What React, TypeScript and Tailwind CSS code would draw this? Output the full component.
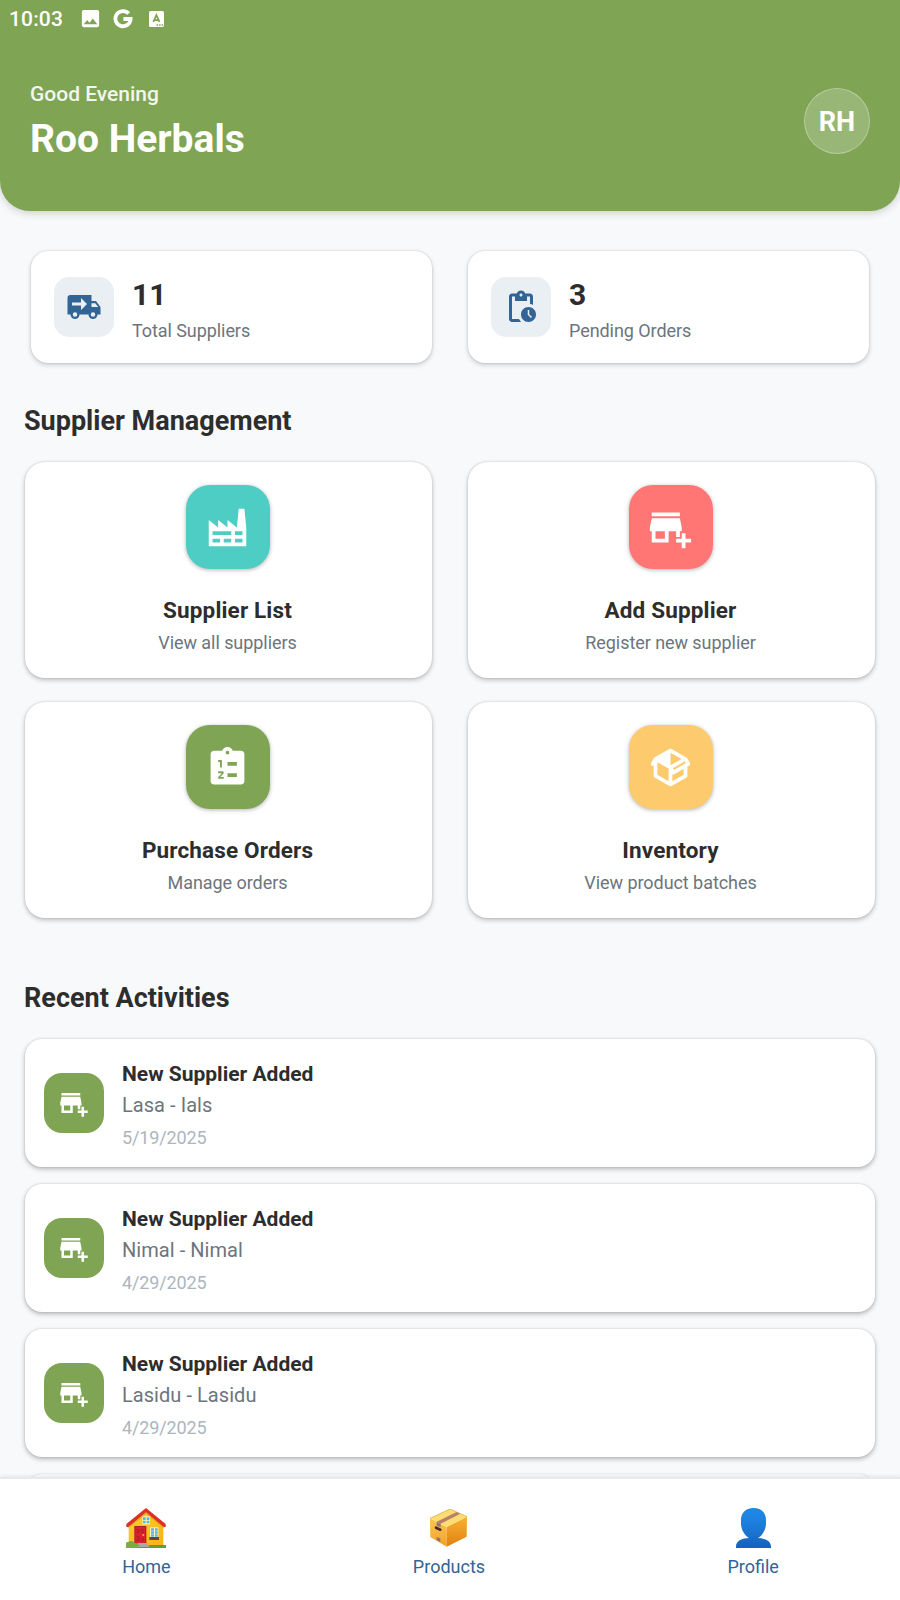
import type { ReactNode } from "react";
import { MdAddBusiness, MdPendingActions, MdImage } from "react-icons/md";

function Glyph({ d, size }: { d: string; size: number }) {
  return (
    <svg width={size} height={size} viewBox="0 0 24 24" fill="currentColor" fillRule="evenodd">
      <path d={d} />
    </svg>
  );
}

const TRUCK =
  "M3,4A2,2 0 0,0 1,6V17H3A3,3 0 0,0 6,20A3,3 0 0,0 9,17H15A3,3 0 0,0 18,20A3,3 0 0,0 21,17H23V12L20,8H17V4M10,6L14,10L10,14V11H4V9H10M17,9.5H19.5L21.47,12H17M6,15.5A1.5,1.5 0 0,1 7.5,17A1.5,1.5 0 0,1 6,18.5A1.5,1.5 0 0,1 4.5,17A1.5,1.5 0 0,1 6,15.5M18,15.5A1.5,1.5 0 0,1 19.5,17A1.5,1.5 0 0,1 18,18.5A1.5,1.5 0 0,1 16.5,17A1.5,1.5 0 0,1 18,15.5Z";
const FACTORY =
  "M4,18V20H8V18H4M4,14V16H14V14H4M10,18V20H14V18H10M16,14V16H20V14H16M16,18V20H20V18H16M2,22V8L7,12V8L12,12V8L17,12L18,2H21L22,12V22H2Z";
const CLIPBOARD =
  "M12,3A1,1 0 0,1 13,4A1,1 0 0,1 12,5A1,1 0 0,1 11,4A1,1 0 0,1 12,3M19,3H14.82C14.4,1.84 13.3,1 12,1C10.7,1 9.6,1.84 9.18,3H5A2,2 0 0,0 3,5V19A2,2 0 0,0 5,21H19A2,2 0 0,0 21,19V5A2,2 0 0,0 19,3M7,8H9V12H8V9H7V8M10,17V18H7V17.08L9,15H7V14H9.25A.75,.75 0 0,1 10,14.75C10,14.95 9.92,15.14 9.79,15.27L8.12,17H10M17,17H12V15H17V17M17,11H12V9H17V11Z";
const PACKAGE =
  "M2,10.96C1.5,10.68 1.35,10.07 1.63,9.59L3.13,7C3.24,6.8 3.41,6.66 3.6,6.58L11.43,2.18C11.59,2.06 11.79,2 12,2C12.21,2 12.41,2.06 12.57,2.18L20.47,6.62C20.66,6.72 20.82,6.88 20.91,7.08L22.36,9.6C22.64,10.08 22.47,10.69 22,10.96L21,11.54V16.5C21,16.88 20.79,17.21 20.47,17.38L12.57,21.82C12.41,21.94 12.21,22 12,22C11.79,22 11.59,21.94 11.43,21.82L3.53,17.38C3.21,17.21 3,16.88 3,16.5V10.96C2.7,11.13 2.32,11.14 2,10.96M12,4.15L12,10.85L17.96,7.5L12,4.15M5,15.91L11,19.29V12.58L5,9.21V15.91M19,15.91V12.69L14,15.59C13.67,15.77 13.3,15.76 13,15.6V19.29L19,15.91M13.85,13.36L20.13,9.73L19.55,8.72L13.27,12.35L13.85,13.36Z";

function HouseIcon() {
  return (
    <svg width="40" height="40" viewBox="0 0 120 120">
      <defs>
        <linearGradient id="wall" x1="0" y1="0" x2="1" y2="1">
          <stop offset="0" stopColor="#fdd02f" />
          <stop offset="1" stopColor="#f9b214" />
        </linearGradient>
      </defs>
      <path d="M8 52 60 8l52 44v63H8Z" fill="url(#wall)" />
      <path d="M60 0 118 47q2 2 1 9l-5 2L60 13 6 58l-5-2q-1-7 1-9Z" fill="#dc3027" />
      <path d="M60 13 114 58V61L60 18 6 61v-3Z" fill="#c98a10" opacity="0.5" />
      <rect x="49" y="25" width="23" height="24" fill="#fff3c8" />
      <path d="M51 28h8v8h-8zM62 28h8v8h-8zM51 38h8v8h-8zM62 38h8v8h-8z" fill="#55b7e6" />
      <rect x="25" y="54" width="36" height="53" fill="#b5182a" />
      <rect x="28" y="57" width="30" height="50" fill="#d8232f" />
      <path d="M32 62h9v14h-9zM45 62h9v14h-9zM32 83h9v17h-9zM45 89h9v11h-9z" fill="#c51c2c" />
      <circle cx="52" cy="81" r="3" fill="#fbc02d" />
      <rect x="72" y="58" width="25" height="30" fill="#fff3c8" />
      <path d="M75 61h9v7h-9zM87 61h8v7h-8zM75 70h9v7h-9zM87 70h8v7h-8zM75 79h9v7h-9zM87 79h8v7h-8z" fill="#55b7e6" />
      <rect x="70" y="87" width="29" height="9" rx="1" fill="#6d4238" />
      <rect x="30" y="111" width="90" height="9" rx="1" fill="#6b9a34" />
      <path d="M35 105h30v7h4v5H35z" fill="#a9a9a4" />
      <path d="M0 120V106q1-5 7-4 5-5 12-2 5 0 7 5 11 0 12 9v6Z" fill="#7cab42" />
    </svg>
  );
}

function ParcelIcon() {
  return (
    <svg width="37" height="38" viewBox="0 0 111 114">
      <defs>
        <linearGradient id="front" x1="0" y1="0" x2="0" y2="1">
          <stop offset="0" stopColor="#fdc750" />
          <stop offset="1" stopColor="#f3a02a" />
        </linearGradient>
        <linearGradient id="side" x1="0" y1="0" x2="0" y2="1">
          <stop offset="0" stopColor="#fbb12f" />
          <stop offset="1" stopColor="#de8212" />
        </linearGradient>
      </defs>
      <path d="M0 28 50 54v59L1 84Z" fill="url(#front)" />
      <path d="M50 54 111 23l-1 60-60 30Z" fill="url(#side)" />
      <path d="M0 28 60 0l51 23-61 31Z" fill="#fddc72" />
      <path d="M0 28 60 0l51 23" fill="none" stroke="#d2a13c" strokeWidth="2" />
      <path d="M20 38 80 9l11 5L32 44Z" fill="#b8806b" />
      <path d="M20 38l12 6v11l-12-5Z" fill="#94766b" />
      <path d="M20 84l11 4v11l-11-5Z" fill="#94766b" />
      <path d="M18 56l13 6" stroke="#4a2d25" strokeWidth="8" strokeLinecap="round" />
    </svg>
  );
}

function PersonIcon() {
  return (
    <svg width="35" height="40" viewBox="0 0 105 120">
      <defs>
        <linearGradient id="person" x1="0" y1="0" x2="0" y2="1">
          <stop offset="0" stopColor="#1e88e5" />
          <stop offset="0.35" stopColor="#1d80df" />
          <stop offset="1" stopColor="#1561bd" />
        </linearGradient>
      </defs>
      <path
        d="M52 0C77 0 90 15 90 36v10C90 66 78 83 66 90c20 1 39 7 39 26v4H0v-4C0 97 19 91 39 90 27 83 15 66 15 46V36C15 15 28 0 52 0Z"
        fill="url(#person)"
      />
    </svg>
  );
}

function StatCard({ icon, value, label }: { icon: ReactNode; value: string; label: string }) {
  return (
    <div className="flex h-28 w-[401px] items-center rounded-[17px] bg-white pl-[23px] shadow-[0_0_2px_rgba(0,0,0,0.18),0_2px_5px_rgba(0,0,0,0.18)]">
      <div className="flex size-[60px] items-center justify-center rounded-[15px] bg-[#eaeff4] text-[#326496]">
        {icon}
      </div>
      <div className="ml-[18px] pt-[6px]">
        <div className="text-[30px] leading-[36px] font-bold text-[#2d2d2d]">{value}</div>
        <div className="mt-[6px] text-[18px] leading-[24px] tracking-[-0.07px] text-[#6c757d]">{label}</div>
      </div>
    </div>
  );
}

function ActionCard({ icon, tile, title, sub }: { icon: ReactNode; tile: string; title: string; sub: string }) {
  return (
    <div className="flex h-[216px] w-[407px] flex-col items-center rounded-[20px] bg-white pt-[23px] pr-[2px] shadow-[0_0_2px_rgba(0,0,0,0.16),0_2px_5px_rgba(0,0,0,0.24)]">
      <div className={`flex size-[84px] items-center justify-center rounded-[24px] text-white shadow-[0_1px_4px_rgba(0,0,0,0.3)] ${tile}`}>
        {icon}
      </div>
      <div className="mt-[27px] text-[22.5px] leading-[28px] font-bold tracking-[0.15px] text-[#2d2d2d]">{title}</div>
      <div className="mt-[7px] text-[18px] leading-[24px] tracking-[-0.06px] text-[#6c757d]">{sub}</div>
    </div>
  );
}

function Activity({ detail, date }: { detail: string; date: string }) {
  return (
    <div className="flex h-[128px] shrink-0 items-center rounded-[17px] bg-white pl-[19px] shadow-[0_0_2px_rgba(0,0,0,0.14),0_2px_5px_rgba(0,0,0,0.28)]">
      <div className="flex size-[60px] items-center justify-center rounded-[18px] bg-[#7fa454] text-white">
        <MdAddBusiness size={30} />
      </div>
      <div className="ml-[18px] pt-[4px]">
        <div className="text-[21px] leading-[28px] font-bold text-[#2d2d2d]">New Supplier Added</div>
        <div className="mt-[3px] text-[20px] leading-[28px] tracking-[0.05px] text-[#6c757d]">{detail}</div>
        <div className="mt-[7px] text-[18px] leading-[24px] tracking-[-0.12px] text-[#adb5bd]">{date}</div>
      </div>
    </div>
  );
}

function Tab({ icon, label }: { icon: ReactNode; label: string }) {
  return (
    <div className="flex flex-col items-center">
      <div className="flex h-[42px] items-center">{icon}</div>
      <div className="mt-[6px] text-[18px] leading-[24px] text-[#326496]">{label}</div>
    </div>
  );
}

export default function App() {
  return (
    <div className="flex h-[1600px] w-[900px] flex-col overflow-hidden bg-[#f8f9fb] font-[Roboto,sans-serif]">
      <header className="h-[211px] shrink-0 rounded-b-[30px] bg-[#7fa454] text-white shadow-[0_2px_8px_rgba(0,0,0,0.18)]">
        <div className="flex h-[37px] items-center pl-[9px] text-[21px] leading-[37px] font-medium">
          <span className="w-[70px] pt-px tracking-[0.15px]">10:03</span>
          <MdImage size={23} />
          <svg className="ml-[11px]" width="20" height="20" viewBox="0 0 20 20" fill="none" stroke="white" strokeWidth="3.8">
            <path d="M15.7 4.6A7.6 7.6 0 1 0 17.6 10H10.4" />
          </svg>
          <svg className="ml-[16px]" width="16" height="18" viewBox="0 0 16 18">
            <rect x="0" y="1" width="15" height="16" rx="1.5" fill="white" />
            <path d="M4.3 11.9 7.4 5.2 10.5 11.9M5.2 10.1H9.6" stroke="#7fa454" strokeWidth="1.8" fill="none" />
            <path d="M7.5 15h1.5M10.1 15h1.5M12.6 15h1.5" stroke="#7fa454" strokeWidth="1.3" />
          </svg>
        </div>
        <div className="mt-[45px] flex items-start justify-between pr-[30px] pl-[30px]">
          <div>
            <div className="text-[21px] leading-[24px] font-medium text-white/90">Good Evening</div>
            <div className="mt-[11px] text-[39px] leading-[44px] font-bold">Roo Herbals</div>
          </div>
          <div className="mt-[6px] flex size-[66px] items-center justify-center rounded-full border-[1.5px] border-white/30 bg-white/20 pt-[2px] text-[27px] font-bold">
            RH
          </div>
        </div>
      </header>

      <main className="flex min-h-0 flex-1 flex-col overflow-hidden">
        <div className="mt-10 flex gap-9 pl-[31px]">
          <StatCard icon={<Glyph d={TRUCK} size={36} />} value="11" label="Total Suppliers" />
          <StatCard icon={<MdPendingActions size={36} />} value="3" label="Pending Orders" />
        </div>
        <h2 className="mt-[42px] pl-6 text-[27px] leading-[33px] font-bold text-[#2d2d2d]">Supplier Management</h2>
        <div className="mt-[24px] grid grid-cols-[407px_407px] gap-x-9 gap-y-6 pl-[25px]">
          <ActionCard icon={<Glyph d={FACTORY} size={45} />} tile="bg-[#4ecdc4]" title="Supplier List" sub="View all suppliers" />
          <ActionCard icon={<MdAddBusiness size={45} />} tile="bg-[#ff7675]" title="Add Supplier" sub="Register new supplier" />
          <ActionCard icon={<Glyph d={CLIPBOARD} size={45} />} tile="bg-[#7fa454]" title="Purchase Orders" sub="Manage orders" />
          <ActionCard icon={<Glyph d={PACKAGE} size={45} />} tile="bg-[#fdcb6e]" title="Inventory" sub="View product batches" />
        </div>
        <h2 className="mt-[64px] pl-6 text-[27px] leading-[33px] font-bold text-[#2d2d2d]">Recent Activities</h2>
        <div className="mt-[24px] flex flex-col gap-[17px] px-[25px]">
          <Activity detail="Lasa - Ials" date="5/19/2025" />
          <Activity detail="Nimal - Nimal" date="4/29/2025" />
          <Activity detail="Lasidu - Lasidu" date="4/29/2025" />
          <div className="h-[128px] shrink-0 rounded-[17px] bg-[#f9fafb] shadow-[0_0_2px_rgba(0,0,0,0.2)]" />
        </div>
      </main>

      <nav className="flex h-[123px] shrink-0 justify-around border-t-2 border-[#e6eaed] bg-white pt-[28px] pl-px shadow-[0_-1px_4px_rgba(0,0,0,0.08)]">
        <Tab icon={<HouseIcon />} label="Home" />
        <Tab icon={<ParcelIcon />} label="Products" />
        <Tab icon={<PersonIcon />} label="Profile" />
      </nav>
    </div>
  );
}
